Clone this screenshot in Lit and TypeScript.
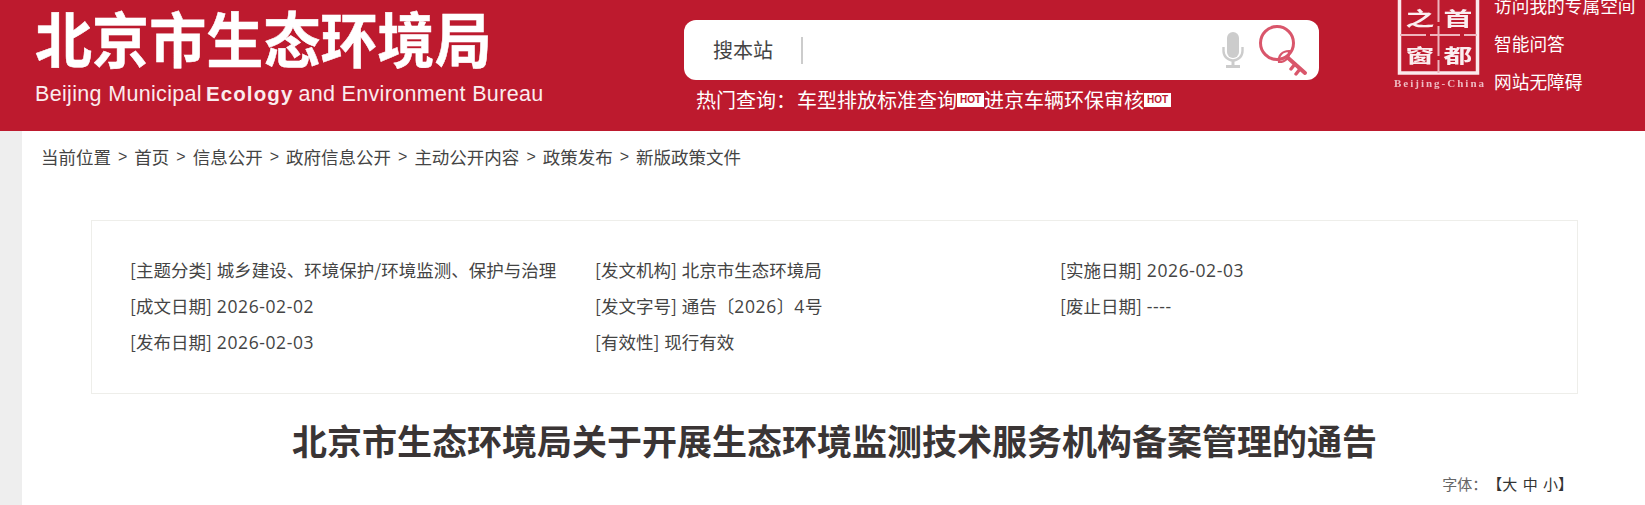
import { LitElement, html, css, svg } from "lit";
import { customElement } from "lit/decorators.js";

const meta: [string, string][][] = [
  [["[主题分类]", "城乡建设、环境保护/环境监测、保护与治理"], ["[发文机构]", "北京市生态环境局"], ["[实施日期]", "2026-02-03"]],
  [["[成文日期]", "2026-02-02"], ["[发文字号]", "通告〔2026〕4号"], ["[废止日期]", "----"]],
  [["[发布日期]", "2026-02-03"], ["[有效性]", "现行有效"], ["", ""]],
];

const crumbs = ["首页", "信息公开", "政府信息公开", "主动公开内容", "政策发布", "新版政策文件"];

const withNums = (v: string) =>
  v.split(/([0-9-]+)/).map((p) => (/^[0-9-]+$/.test(p) ? html`<span class="num">${p}</span>` : p));

@customElement("app-root")
export class AppRoot extends LitElement {
  static styles = css`
    :host { display: block; width: 1645px; height: 505px; overflow: hidden; background: #eee; font-family: "Noto Sans CJK SC", "Noto Sans", sans-serif; color: #333; }
    .header { display: flex; height: 131px; background: #bd1a2e; color: #fff; }
    .logo { width: 649px; padding: 0 0 0 35px; flex: none; box-sizing: content-box; }
    .logo-cn { font-size: 57px; line-height: 74px; font-weight: 700; letter-spacing: 0.1px; white-space: nowrap; transform: scaleY(1.06); -webkit-text-stroke: 0.5px #fff; }
    .logo-en { font-family: "Liberation Sans", sans-serif; font-size: 21.5px; line-height: 26px; margin-top: 7px; white-space: nowrap; display: flex; color: #fbecee; letter-spacing: 0.33px; }
    .logo-en b { margin: 0 5px 0 4px; font-size: 20.5px; letter-spacing: 1.1px; }
    .search-col { width: 635px; padding-top: 20px; flex: none; }
    .box { height: 60px; border-radius: 12px; background: #fff; display: flex; align-items: center; padding-left: 29px; }
    .label { font-size: 20px; color: #444; width: 88px; flex: none; line-height: 30px; }
    .sep { width: 2px; height: 27px; background: #ccc; flex: none; }
    .mic { margin-left: 419px; flex: none; display: block; }
    .key { margin-left: 14px; flex: none; display: block; }
    .hot { display: flex; align-items: center; margin: 5px 0 0 12px; font-size: 20px; line-height: 30px; white-space: nowrap; }
    .hot .t { width: 101px; }
    .badge { width: 27px; height: 14px; background: #fff; color: #bd1a2e; font: 700 10px/14px "Liberation Sans", sans-serif; text-align: center; flex: none; }
    .stamp { margin-left: 75px; width: 100px; flex: none; display: block; filter: blur(0.4px); }
    .links { flex: none; margin-top: -14px; font-size: 17.7px; line-height: 38px; white-space: nowrap; }
    .main { margin-left: 22px; background: #fff; height: 374px; }
    .crumb { padding: 12px 0 0 19px; font-size: 17.5px; line-height: 28px; color: #444; display: flex; }
    .crumb i { font-style: normal; font-family: "Liberation Sans", sans-serif; font-size: 16px; margin: 0 7px; }
    .info { margin: 49px 0 0 69px; width: 1487px; height: 174px; box-sizing: border-box; border: 1px solid #eeeeea; padding: 31px 0 0 38px; }
    .row { display: flex; height: 36px; line-height: 36px; font-size: 17.5px; color: #444; }
    .cell { width: 465px; flex: none; white-space: nowrap; }
    .val { margin-left: 5px; }
    .num { font-family: "Open Sans", sans-serif; letter-spacing: 0.6px; }
    h1 { margin: 19px 0 0; font-size: 35px; line-height: 54px; font-weight: 700; color: #3a3535; text-align: center; width: 1625px; white-space: nowrap; }
    .font-size { display: flex; justify-content: flex-end; margin: 7px 72px 0 0; font-size: 15px; line-height: 20px; color: #666; white-space: pre; }
    .font-size b { font-weight: 400; color: #333; word-spacing: 2px; }
  `;

  render() {
    return html`
      <div class="header">
        <div class="logo">
          <div class="logo-cn">北京市生态环境局</div>
          <div class="logo-en">Beijing Municipal<b>Ecology</b>and Environment Bureau</div>
        </div>
        <div class="search-col">
          <div class="box">
            <div class="label">搜本站</div>
            <div class="sep"></div>
            <svg class="mic" width="22" height="36" viewBox="0 0 22 36">
              <rect x="5" y="0" width="12" height="26" rx="6" fill="#ccc"/>
              <path d="M1.5 15v4a9.5 9.5 0 0 0 19 0v-4" fill="none" stroke="#ccc" stroke-width="2.4"/>
              <path d="M11 28v5" stroke="#ccc" stroke-width="3"/>
              <rect x="4" y="33" width="14" height="3" fill="#ccc"/>
            </svg>
            <svg class="key" width="50" height="52" viewBox="0 0 50 52">
              <g fill="none" stroke="#d9566b" stroke-width="3" stroke-linecap="round">
                <circle cx="19" cy="19" r="16.5"/>
                <path d="M21 38c-1-6 3-11 10-11 1 6-3 11-10 11z" stroke-width="2.2"/>
                <path d="M29 33l18 16" stroke-width="4"/>
                <path d="M37 40l-4 5M42 45l-4 5" stroke-width="3.4"/>
              </g>
            </svg>
          </div>
          <div class="hot">
            <span class="t">热门查询：</span>车型排放标准查询<span class="badge">HOT</span>进京车辆环保审核<span class="badge">HOT</span>
          </div>
        </div>
        <svg class="stamp" width="100" height="92" viewBox="0 0 100 92">
          ${svg`
            <rect x="5.5" y="-4" width="78" height="77" fill="none" stroke="#fbe9ec" stroke-width="3.5"/>
            <path d="M44.5 -4V73M6 35h77" stroke="#eeb4bc" stroke-width="2" stroke-dasharray="26 4 30 4"/>
            <g fill="#fbeef0" font-size="24" text-anchor="middle" font-family="Noto Sans CJK SC, sans-serif" font-weight="700">
              <text transform="translate(26 26) scale(1.2 .82)">之</text>
              <text transform="translate(64 26) scale(1.2 .82)">首</text>
              <text transform="translate(26 63) scale(1.2 .82)">窗</text>
              <text transform="translate(64 63) scale(1.2 .82)">都</text>
            </g>
            <text x="0" y="87" fill="#eebcc3" font-size="11" font-weight="700" font-family="Liberation Serif, serif" textLength="90" lengthAdjust="spacing">Beijing-China</text>
          `}
        </svg>
        <div class="links">
          <div>访问我的专属空间</div>
          <div>智能问答</div>
          <div>网站无障碍</div>
        </div>
      </div>
      <div class="main">
        <div class="crumb">当前位置${crumbs.map((c) => html`<i>&gt;</i>${c}`)}</div>
        <div class="info">
          ${meta.map(
            (r) => html`<div class="row">
              ${r.map((c) => html`<div class="cell">${c[0]}<span class="val">${withNums(c[1])}</span></div>`)}
            </div>`
          )}
        </div>
        <h1>北京市生态环境局关于开展生态环境监测技术服务机构备案管理的通告</h1>
        <div class="font-size">字体：<b>【大 中 小】</b></div>
      </div>
    `;
  }
}
